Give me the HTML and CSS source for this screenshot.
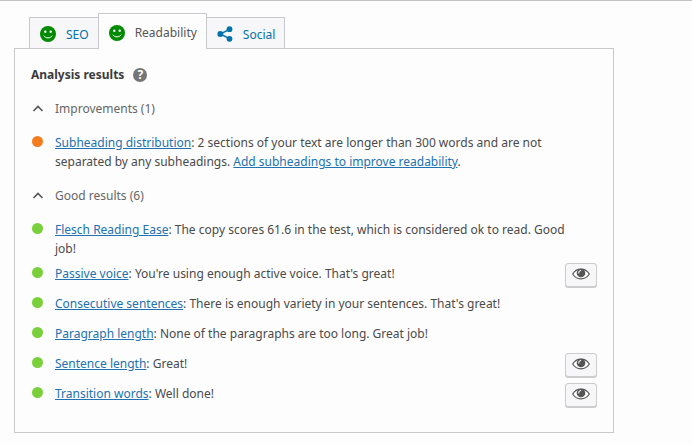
FILE: index.html
```html
<!DOCTYPE html>
<html lang="en">
<head>
  <meta charset="UTF-8">
  <meta name="viewport" content="width=device-width, initial-scale=1.0">
  <title>Readability analysis</title>
  <link rel="stylesheet" href="styles.css">
</head>
<body>

<!-- Shared icons -->
<svg class="sprite" aria-hidden="true">
  <symbol id="icon-smiley" viewBox="0 0 16 16">
    <circle cx="8" cy="8" r="8" fill="#008a00"/>
    <circle cx="5.3" cy="5.7" r="1.2" fill="#fff"/>
    <circle cx="10.7" cy="5.7" r="1.2" fill="#fff"/>
    <path d="M4 10c1.800 2.600 6.200 2.600 8 0" fill="none" stroke="#fff" stroke-width="1" stroke-linecap="round"/>
  </symbol>
  <symbol id="icon-share" viewBox="0 0 16 16">
    <path d="M12.500 3.300L3.300 8l9.200 4.700" fill="none" stroke="#0073aa" stroke-width="1.5"/>
    <circle cx="3.300" cy="8" r="2.900" fill="#0073aa"/>
    <circle cx="12.500" cy="3.200" r="2.900" fill="#0073aa"/>
    <circle cx="12.500" cy="12.800" r="2.900" fill="#0073aa"/>
  </symbol>
  <symbol id="icon-up" viewBox="0 0 12 12">
    <path d="M1.500 8L6 3.500 10.500 8" fill="none" stroke="#555" stroke-width="1.600"/>
  </symbol>
  <symbol id="icon-eye" viewBox="0 0 18 12">
    <path d="M.7 6C4.500-.6 13.500-.6 17.300 6 13.500 12.400 4.500 12.400.7 6z" fill="#fff" stroke="#555" stroke-width="1.200"/>
    <circle cx="9" cy="5" r="4.300" fill="#555"/>
    <path d="M6.700 5c0-1.500.8-2.300 2-2.500" fill="none" stroke="#fff" stroke-width="1.100" stroke-linecap="round"/>
  </symbol>
</svg>

<main class="metabox">
  <div class="tabs" role="tablist">
    <button type="button" class="tab" role="tab" aria-selected="false"><svg class="tab-icon"><use href="#icon-smiley"/></svg>SEO</button>
    <button type="button" class="tab active" role="tab" aria-selected="true"><svg class="tab-icon"><use href="#icon-smiley"/></svg>Readability</button>
    <button type="button" class="tab" role="tab" aria-selected="false"><svg class="tab-icon"><use href="#icon-share"/></svg>Social</button>
  </div>

  <div class="panel" role="tabpanel">
    <div class="panel-title">
      <h2>Analysis results</h2>
      <button type="button" class="help" aria-label="Help">?</button>
    </div>

    <button type="button" class="toggle" aria-expanded="true"><svg class="chevron"><use href="#icon-up"/></svg>Improvements (1)</button>
    <ul class="results">
      <li class="result ok">
        <p><a href="#">Subheading distribution</a>: 2 sections of your text are longer than 300 words and are not separated by any subheadings. <a href="#">Add subheadings to improve readability</a>.</p>
      </li>
    </ul>

    <button type="button" class="toggle" aria-expanded="true"><svg class="chevron"><use href="#icon-up"/></svg>Good results (6)</button>
    <ul class="results">
      <li class="result good">
        <p><a href="#">Flesch Reading Ease</a>: The copy scores 61.6 in the test, which is considered ok to read. Good job!</p>
      </li>
      <li class="result good">
        <p><a href="#">Passive voice</a>: You're using enough active voice. That's great!</p>
        <button type="button" class="mark" aria-label="Highlight"><svg class="eye"><use href="#icon-eye"/></svg></button>
      </li>
      <li class="result good">
        <p><a href="#">Consecutive sentences</a>: There is enough variety in your sentences. That's great!</p>
      </li>
      <li class="result good">
        <p><a href="#">Paragraph length</a>: None of the paragraphs are too long. Great job!</p>
      </li>
      <li class="result good">
        <p><a href="#">Sentence length</a>: Great!</p>
        <button type="button" class="mark" aria-label="Highlight"><svg class="eye"><use href="#icon-eye"/></svg></button>
      </li>
      <li class="result good">
        <p><a href="#">Transition words</a>: Well done!</p>
        <button type="button" class="mark" aria-label="Highlight"><svg class="eye"><use href="#icon-eye"/></svg></button>
      </li>
    </ul>
  </div>
</main>

</body>
</html>
```
FILE: styles.css
```css
* {
  box-sizing: border-box;
}

body {
  margin: 0;
  background-color: #fdfdfd;
  border-top: 1px solid #c3c2c5;
  font-family: "Noto Sans", "Open Sans", sans-serif;
  font-size: 12px;
  line-height: 19px;
  color: #4a4a4a;
}

button {
  font: inherit;
  color: inherit;
  cursor: pointer;
}

.sprite {
  position: absolute;
  width: 0;
  height: 0;
}

.metabox {
  max-width: 628px;
  padding: 12px 14px;
}

/* Tabs */
.tabs {
  display: flex;
  align-items: flex-end;
  padding-left: 15px;
}

.tab {
  display: flex;
  align-items: center;
  gap: 10px;
  height: 31px;
  padding: 2px 9px 0 10px;
  border: 1px solid #c9c8cc;
  border-bottom: none;
  background-color: #f7f6f9;
  color: #0073aa;
}

.tab.active {
  height: 36px;
  margin: 0 -1px -1px;
  background-color: #fdfdfd;
  color: #555;
  z-index: 1;
}

.tab-icon {
  width: 16px;
  height: 16px;
}

/* Analysis panel */
.panel {
  padding: 16px 16px 24px;
  border: 1px solid #c9c8cc;
}

.panel-title {
  display: flex;
  align-items: center;
  gap: 9px;
  margin-bottom: 8px;
}

h2 {
  margin: 0;
  font-size: 12px;
  color: #3c3c3c;
}

.help {
  width: 14px;
  height: 14px;
  padding: 0;
  border: none;
  border-radius: 50%;
  background-color: #757575;
  color: #fff;
  font-weight: bold;
  line-height: 14px;
}

.toggle {
  display: flex;
  align-items: center;
  gap: 11px;
  width: 100%;
  padding: 7px 0 7px 1px;
  border: none;
  background: none;
  color: #666;
}

.chevron {
  width: 12px;
  height: 12px;
}

.results {
  display: flex;
  flex-direction: column;
  gap: 6px;
  margin: 8px 0;
  padding: 0;
  list-style: none;
}

.results:last-child {
  margin-bottom: 0;
}

.result {
  display: flex;
  align-items: flex-start;
  min-height: 24px;
}

.result::before {
  content: "";
  flex: none;
  width: 11px;
  height: 11px;
  margin: 3px 12px 0 1px;
  border-radius: 50%;
}

.result.ok::before {
  background-color: #f27c1e;
}

.result.good::before {
  background-color: #7ad03a;
}

.result p {
  flex: 1;
  margin: 0;
  padding-right: 16px;
}

a {
  color: #2271b1;
}

.mark {
  display: flex;
  align-items: center;
  justify-content: center;
  width: 32px;
  height: 24px;
  margin-top: -1px;
  padding: 0 0 2px;
  border: 1px solid #ccc;
  border-radius: 3px;
  background-color: #f7f6f9;
  box-shadow: 0 1px 0 #ccc;
}

.eye {
  width: 18px;
  height: 12px;
}
```
